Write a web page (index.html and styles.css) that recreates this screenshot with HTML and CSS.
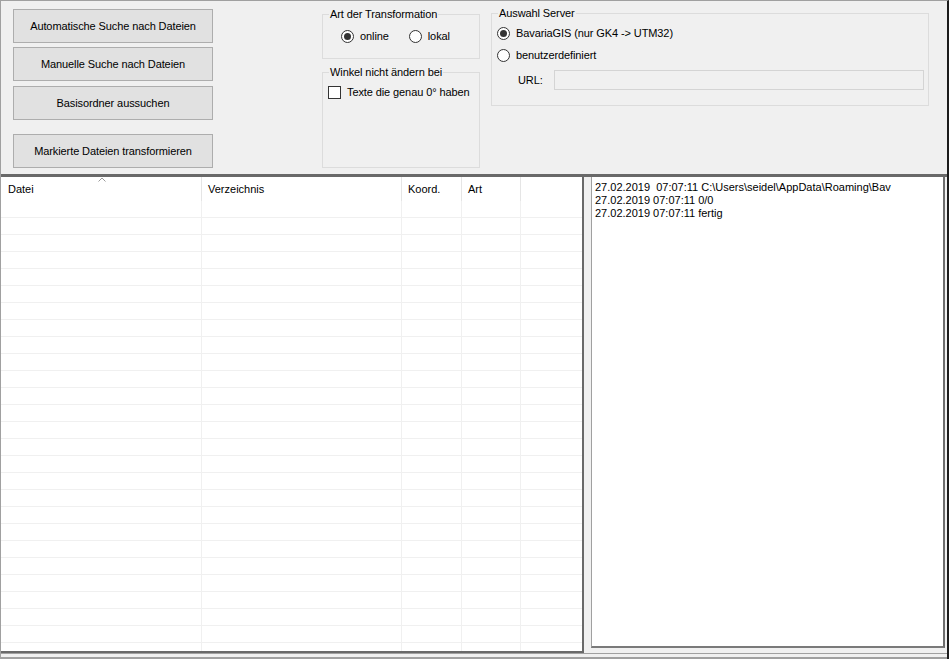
FILE: index.html
```html
<!DOCTYPE html>
<html lang="de">
<head>
  <meta charset="UTF-8">
  <title>Transformation</title>
  <link rel="stylesheet" href="styles.css">
</head>
<body>

  <div class="window">
    <!-- Bedienleiste oben -->
    <div class="top">
      <div class="actions">
        <button class="btn">Automatische Suche nach Dateien</button>
        <button class="btn btn-manual">Manuelle Suche nach Dateien</button>
        <button class="btn btn-base">Basisordner aussuchen</button>
        <button class="btn btn-run">Markierte Dateien transformieren</button>
      </div>

      <div class="options">
        <fieldset class="group group-mode">
          <legend>Art der Transformation</legend>
          <div class="radio-row">
            <label class="option"><span class="radio checked"></span>online</label>
            <label class="option option-local"><span class="radio"></span>lokal</label>
          </div>
        </fieldset>

        <fieldset class="group group-angle">
          <legend>Winkel nicht ändern bei</legend>
          <label class="option check-row"><span class="checkbox"></span>Texte die genau 0° haben</label>
        </fieldset>
      </div>

      <fieldset class="group group-server">
        <legend>Auswahl Server</legend>
        <label class="option server-row first"><span class="radio checked"></span>BavariaGIS (nur GK4 -&gt; UTM32)</label>
        <label class="option server-row second"><span class="radio"></span>benutzerdefiniert</label>
        <div class="url-row">
          <span class="url-label">URL:</span>
          <input class="url-input" type="text" disabled>
        </div>
      </fieldset>
    </div>

    <!-- Liste + Protokoll -->
    <div class="split">
      <div class="listview">
        <div class="lv-row lv-head">
          <div class="lv-cell">Datei
            <svg class="sort" width="8" height="5" viewBox="0 0 8 5"><polyline points="0.5,4.5 4,1 7.5,4.5" fill="none" stroke="#9a9a9a" stroke-width="1"/></svg>
          </div>
          <div class="lv-cell">Verzeichnis</div>
          <div class="lv-cell">Koord.</div>
          <div class="lv-cell">Art</div>
          <div class="lv-cell"></div>
        </div>
        <div id="rows"></div>
      </div>

      <div class="logpanel">
        <div class="log">
          <div class="log-line clip">27.02.2019  07:07:11 C:\Users\seidel\AppData\Roaming\Bav</div>
          <div class="log-line">27.02.2019 07:07:11 0/0</div>
          <div class="log-line">27.02.2019 07:07:11 fertig</div>
        </div>
      </div>
    </div>

    <div class="bottom"></div>
  </div>

  <script>
    // leere Zeilen der Dateiliste
    const rows = document.getElementById('rows');
    let html = '';
    for (let i = 0; i < 28; i++) {
      html += '<div class="lv-row"><div class="lv-cell"></div><div class="lv-cell"></div><div class="lv-cell"></div><div class="lv-cell"></div><div class="lv-cell"></div></div>';
    }
    rows.innerHTML = html;
  </script>

</body>
</html>
```

FILE: styles.css
```css
body {
  margin: 0;
  background-color: #f0f0f0;
  font-family: 'Liberation Sans', Arial, sans-serif;
  font-size: 11px;
  color: #000;
}
.window {
  width: 949px;
  height: 659px;
  box-sizing: border-box;
  border-top: 1px solid #a0a0a0;
  border-left: 1px solid #a0a0a0;
  border-right: 2px solid #1c1c1c;
  display: flex;
  flex-direction: column;
  overflow: hidden;
}

/* oberer Bereich */
.top {
  height: 173px;
  display: flex;
  align-items: flex-start;
  flex-shrink: 0;
  letter-spacing: -0.1px;
}
.actions {
  display: flex;
  flex-direction: column;
  margin-left: 12px;
  padding-top: 8px;
}
.btn {
  width: 200px;
  height: 34px;
  margin: 0;
  padding: 0;
  background-color: #e1e1e1;
  border: 1px solid #adadad;
  font-family: inherit;
  font-size: 11px;
  letter-spacing: -0.1px;
  color: #000;
}
.btn-manual { margin-top: 4px; }
.btn-base { margin-top: 5px; }
.btn-run { margin-top: 14px; }

.options {
  margin-left: 109px;
  padding-top: 7px;
  width: 158px;
}
.group {
  margin: 0;
  padding: 0;
  border: 1px solid #dcdcdc;
  box-sizing: border-box;
  min-width: 0;
}
.group legend {
  margin-left: 6px;
  padding: 0 1px;
  line-height: 13px;
}
.group-mode { height: 51px; }
.group-angle { height: 102px; margin-top: 7px; }
.group-server {
  width: 438px;
  height: 99px;
  margin-left: 11px;
  margin-top: 6px;
}

.option {
  display: flex;
  align-items: center;
  line-height: 13px;
}
.radio, .checkbox {
  width: 13px;
  height: 13px;
  box-sizing: border-box;
  border: 1px solid #333;
  background-color: #fff;
  margin-right: 6px;
  flex-shrink: 0;
  display: flex;
  align-items: center;
  justify-content: center;
}
.radio { border-radius: 50%; }
.radio.checked::after {
  content: '';
  width: 7px;
  height: 7px;
  border-radius: 50%;
  background-color: #333;
}
.radio-row {
  display: flex;
  margin-top: 9px;
  margin-left: 18px;
}
.option-local { margin-left: 20px; }
.check-row {
  margin-top: 7px;
  margin-left: 5px;
}
.server-row { margin-left: 5px; }
.server-row.first { margin-top: 7px; }
.server-row.second { margin-top: 9px; }
.url-row {
  display: flex;
  align-items: center;
  margin-top: 8px;
  margin-left: 26px;
}
.url-label { width: 36px; }
.url-input {
  width: 370px;
  height: 20px;
  box-sizing: border-box;
  margin: 0;
  border: 1px solid #d4d4d4;
  background-color: #f0f0f0;
}

/* Liste und Protokoll */
.split {
  display: flex;
  height: 476px;
  border-top: 3px solid #696969;
  flex-shrink: 0;
}
.listview {
  width: 583px;
  box-sizing: border-box;
  background-color: #fff;
  border-right: 2px solid #696969;
  border-bottom: 2px solid #696969;
  overflow: hidden;
}
.lv-row {
  display: grid;
  grid-template-columns: 201px 200px 60px 59px 61px;
  height: 17px;
}
.lv-row .lv-cell {
  box-sizing: border-box;
  border-right: 1px solid #f0f0f0;
  border-bottom: 1px solid #f0f0f0;
}
.lv-row .lv-cell:last-child { border-right: none; }
.lv-head {
  height: 24px;
}
.lv-head .lv-cell {
  position: relative;
  border-bottom: none;
  border-right-color: #e5e5e5;
  padding-left: 6px;
  line-height: 24px;
}
.lv-head .lv-cell:first-child { padding-left: 7px; }
.sort {
  position: absolute;
  left: 97px;
  top: 0;
}

.logpanel {
  flex: 1;
  display: flex;
  padding: 0 2px 5px 7px;
}
.log {
  flex: 1;
  background-color: #fff;
  border-left: 1px solid #a0a0a0;
  border-right: 2px solid #6d6d6d;
  border-bottom: 2px solid #7a7a7a;
  padding: 4px 0 0 3px;
  line-height: 13px;
}
.log-line { white-space: pre; }
.log-line.clip {
  width: 297px;
  overflow: hidden;
}

.bottom {
  flex: 1;
  border-top: 1px solid #a0a0a0;
  border-bottom: 2px solid #a0a0a0;
}
```
